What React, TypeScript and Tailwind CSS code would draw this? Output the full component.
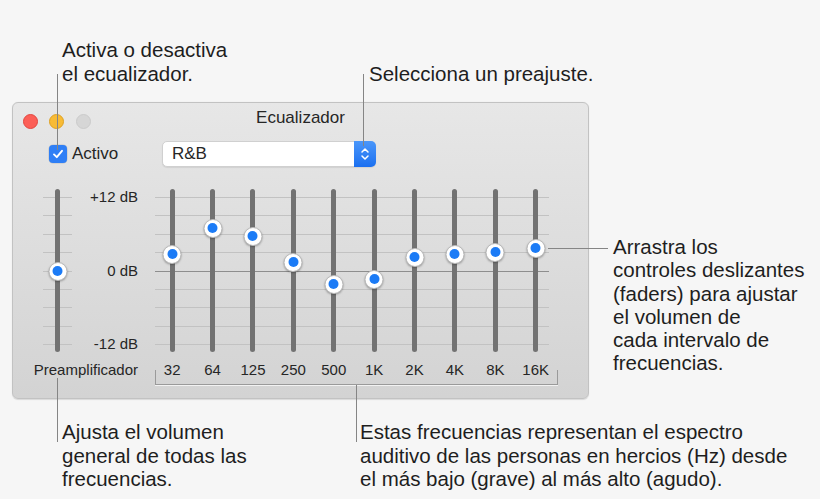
import React from "react";

const bands = [
  { label: "32", y: 254 },
  { label: "64", y: 228 },
  { label: "125", y: 236 },
  { label: "250", y: 262 },
  { label: "500", y: 284 },
  { label: "1K", y: 279 },
  { label: "2K", y: 257 },
  { label: "4K", y: 254 },
  { label: "8K", y: 252 },
  { label: "16K", y: 248 },
];

const TRACK_TOP = 189;

function Knob({ y }: { y: number }) {
  return (
    <div
      className="absolute left-1/2 -translate-x-1/2 w-[19px] h-[19px] rounded-full bg-white border border-[#b9b9b9] shadow-[0_1px_2px_rgba(0,0,0,0.28)] flex items-center justify-center"
      style={{ top: y - TRACK_TOP - 9.5 }}
    >
      <div className="w-[10px] h-[10px] rounded-full bg-[#1b7bf6]" />
    </div>
  );
}

function Ticks({ main }: { main?: boolean }) {
  return (
    <div className="absolute left-0 right-0 top-[8px] h-[148px] flex flex-col justify-between">
      {Array.from({ length: 9 }).map((_, i) => (
        <div
          key={i}
          className={
            main && i === 4 ? "h-px bg-[#8e8e8e]" : "h-px bg-[#c2c2c2]"
          }
        />
      ))}
    </div>
  );
}

function Track({ y, width }: { y: number; width: string }) {
  return (
    <div className={`relative h-full ${width} flex justify-center`}>
      <div className="w-[5px] h-full rounded-full bg-[#727272]" />
      <Knob y={y} />
    </div>
  );
}

export default function App() {
  return (
    <div
      className="relative w-[820px] h-[499px] overflow-hidden bg-[#f6f6f6] text-[#1e1e1e]"
      style={{ fontFamily: '"Liberation Sans", Arial, sans-serif' }}
    >
      {/* top annotations */}
      <div className="flex items-end pt-[38px] pl-[62px] text-[20.5px] leading-[23.5px]">
        <div className="w-[307px]">
          Activa o desactiva
          <br />
          el ecualizador.
        </div>
        <div>Selecciona un preajuste.</div>
      </div>

      {/* window + right annotation */}
      <div className="flex mt-[17px] pl-[12px]">
        <div className="w-[577px] h-[297px] rounded-[6px] border border-[#c2c2c2] bg-gradient-to-b from-[#e7e7e7] to-[#d3d3d3] text-[#262626] flex flex-col shadow-[0_0.5px_1px_rgba(0,0,0,0.12)]">
          {/* title bar */}
          <div className="relative h-[37px] flex items-center pl-[9.5px] gap-[11.5px]">
            <div className="w-[15px] h-[15px] rounded-full bg-[#fc5f57] border border-[#e2463f]" />
            <div className="w-[15px] h-[15px] rounded-full bg-[#f8bb35] border border-[#dea123]" />
            <div className="w-[15px] h-[15px] rounded-full bg-[#d6d6d6] border border-[#cbcbcb]" />
            <div className="absolute left-0 right-0 top-[5px] text-center text-[17px] leading-[20px]">
              Ecualizador
            </div>
          </div>

          {/* controls row */}
          <div className="mt-[1px] h-[26px] flex items-center pl-[36px]">
            <div className="w-[113px] flex items-center gap-[5px]">
              <div className="w-[18px] h-[18px] rounded-[4px] bg-[#2f7ff6] flex items-center justify-center shadow-[0_0_0_0.5px_rgba(0,0,0,0.15)]">
                <svg width="12" height="12" viewBox="0 0 12 12" fill="none">
                  <path
                    d="M2 6.4 L4.8 9.2 L10 2.8"
                    stroke="white"
                    strokeWidth="1.9"
                    strokeLinecap="round"
                    strokeLinejoin="round"
                  />
                </svg>
              </div>
              <span className="text-[17px] leading-[20px]">Activo</span>
            </div>
            <div className="w-[214px] h-[26px] flex rounded-[5px] bg-white border border-[#d0d0d0] shadow-[0_1px_1px_rgba(0,0,0,0.08)]">
              <div className="flex-1 flex items-center pl-[9px] text-[17px] leading-[20px]">
                R&amp;B
              </div>
              <div className="w-[22px] -my-px -mr-px rounded-r-[5px] bg-gradient-to-b from-[#4a97fa] to-[#1a6ff0] flex items-center justify-center">
                <svg width="12" height="18" viewBox="0 0 12 18" fill="none">
                  <path
                    d="M3 7 L6 4 L9 7"
                    stroke="white"
                    strokeWidth="1.5"
                    strokeLinecap="round"
                    strokeLinejoin="round"
                  />
                  <path
                    d="M3 11 L6 14 L9 11"
                    stroke="white"
                    strokeWidth="1.5"
                    strokeLinecap="round"
                    strokeLinejoin="round"
                  />
                </svg>
              </div>
            </div>
          </div>

          {/* slider area */}
          <div className="mt-[22px] h-[163px] flex pl-[30px]">
            <div className="relative w-[29px] h-full">
              <Ticks />
              <Track y={271} width="w-[29px]" />
            </div>
            <div className="w-[66px] h-full flex flex-col justify-between items-end text-[15px] leading-[16px]">
              <div>+12 dB</div>
              <div>0 dB</div>
              <div>-12 dB</div>
            </div>
            <div className="relative ml-[14px] w-[404px] h-full">
              <div className="absolute left-[3px] right-[7px] top-0 bottom-0">
                <Ticks main />
              </div>
              <div className="relative flex h-full">
                {bands.map((b) => (
                  <Track key={b.label} y={b.y} width="w-[40.4px]" />
                ))}
              </div>
            </div>
          </div>

          {/* labels row */}
          <div className="mt-[9px] h-[18px] flex text-[15px] leading-[18px]">
            <div className="w-[125px] text-right">Preamplificador</div>
            <div className="relative ml-[14px] w-[404px] flex">
              <div className="absolute left-[3px] w-[403px] top-[9px] h-[15px] border-l border-r border-b border-[#9a9a9a] shadow-[0_1px_0_rgba(255,255,255,0.7)]" />
              {bands.map((b) => (
                <div key={b.label} className="w-[40.4px] text-center">
                  {b.label}
                </div>
              ))}
            </div>
          </div>
        </div>

        <div className="ml-[24px] mt-[133px] text-[20.5px] leading-[23.3px]">
          Arrastra los
          <br />
          controles deslizantes
          <br />
          (faders) para ajustar
          <br />
          el volumen de
          <br />
          cada intervalo de
          <br />
          frecuencias.
        </div>
      </div>

      {/* bottom annotations */}
      <div className="flex mt-[21px] text-[20.5px] leading-[23.5px]">
        <div className="ml-[62px] w-[298px]">
          Ajusta el volumen
          <br />
          general de todas las
          <br />
          frecuencias.
        </div>
        <div>
          Estas frecuencias representan el espectro
          <br />
          auditivo de las personas en hercios (Hz) desde
          <br />
          el más bajo (grave) al más alto (agudo).
        </div>
      </div>

      {/* callout lines */}
      <div className="absolute left-[57px] top-[74px] w-px h-[76px] bg-[#858585]" />
      <div className="absolute left-[363px] top-[74px] w-px h-[72px] bg-[#858585]" />
      <div className="absolute left-[548px] top-[248px] w-[60px] h-px bg-[#858585]" />
      <div className="absolute left-[57px] top-[378px] w-px h-[64px] bg-[#858585]" />
      <div className="absolute left-[356px] top-[385px] w-px h-[57px] bg-[#858585]" />
    </div>
  );
}
